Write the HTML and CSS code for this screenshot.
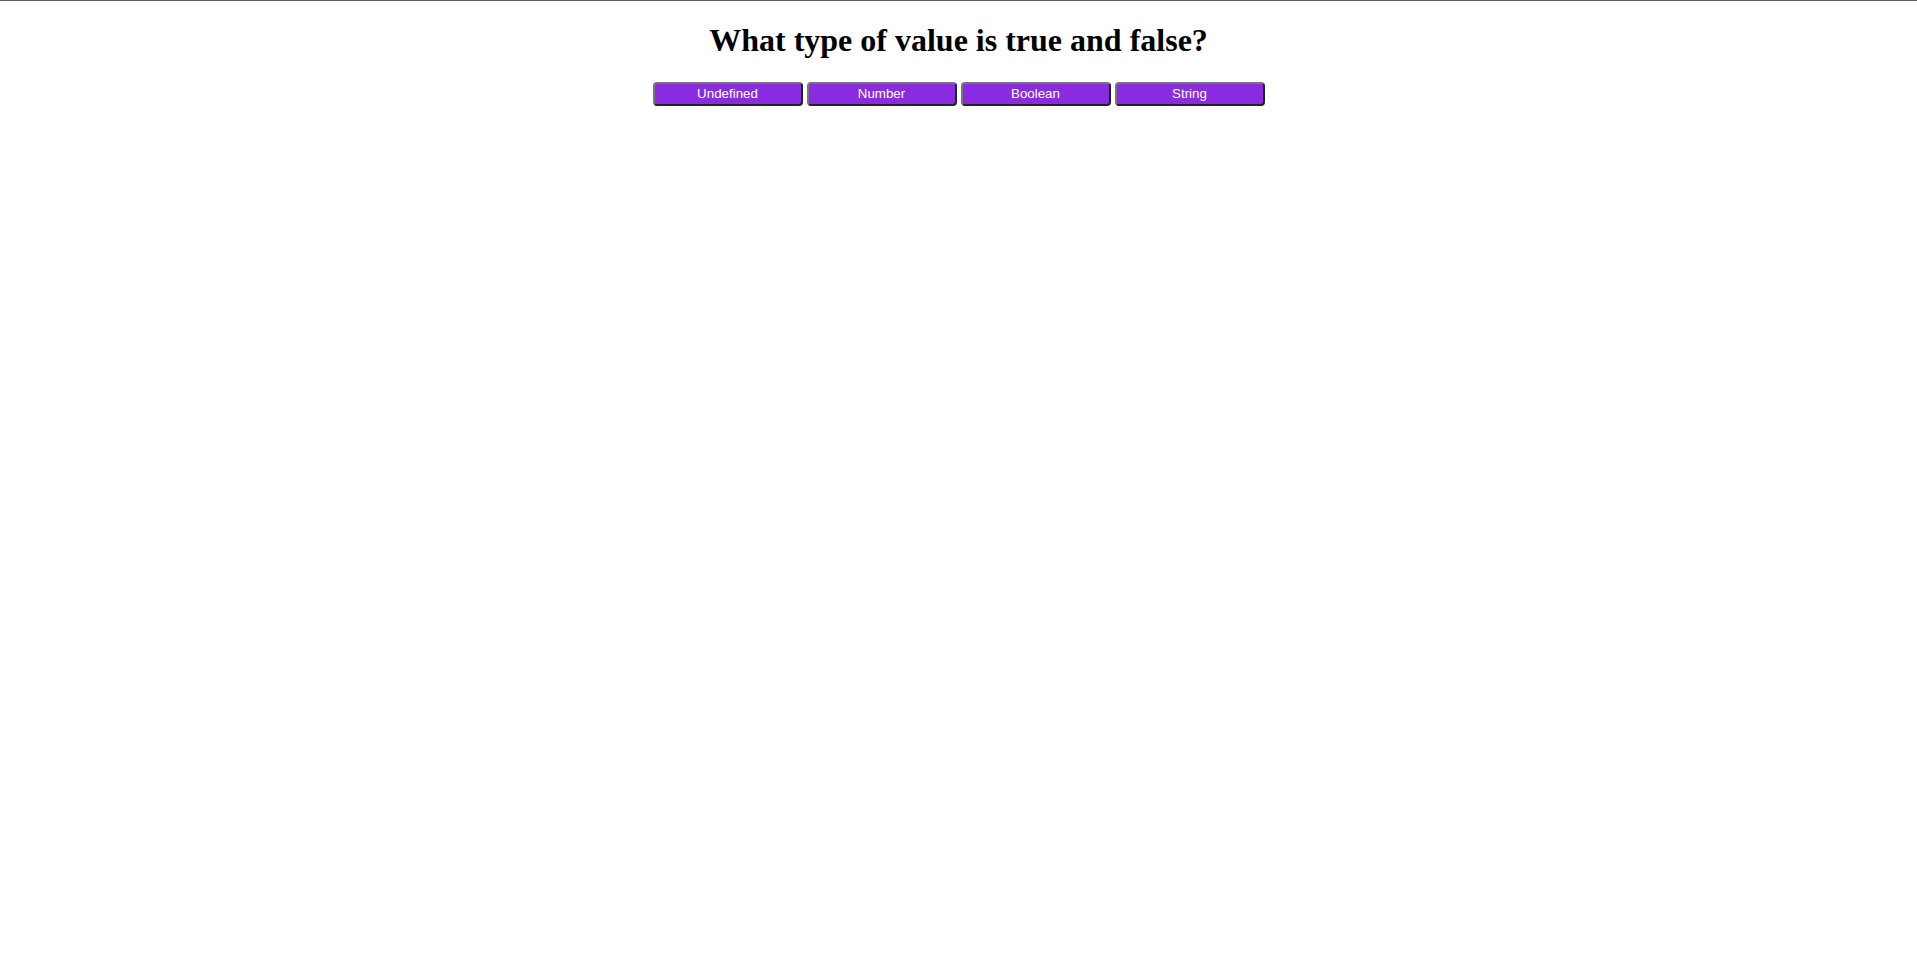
FILE: index.html
```html
<!DOCTYPE html>
<html lang="en">
<head>
<meta charset="utf-8">
<title>Quiz</title>
<link rel="stylesheet" href="styles.css">
</head>
<body>
<div class="quiz">
  <h1 class="question">What type of value is true and false?</h1>
  <div class="answers">
    <button class="answer">Undefined</button>
    <button class="answer">Number</button>
    <button class="answer">Boolean</button>
    <button class="answer">String</button>
  </div>
</div>
</body>
</html>
```
FILE: styles.css
```css
html {
  border-top: 1px solid #5c5c5c;
  background: #ffffff;
}
body {
  margin: 0 8px 8px;
  font-family: "Liberation Serif", "Times New Roman", serif;
  color: #000000;
}
.quiz {
  text-align: center;
}
.question {
  font-size: 32px;
  font-weight: bold;
  margin: 21px 0 22.5px;
}
.answers {
  font-size: 16px;
}
.answer {
  box-sizing: border-box;
  width: 150px;
  height: 24px;
  padding: 1px 6px;
  background: #8a2be2;
  color: #ffffff;
  border: 2px outset #767676;
  border-radius: 4px;
  font-family: "Liberation Sans", Arial, sans-serif;
  font-size: 13.333px;
  cursor: pointer;
}
```
